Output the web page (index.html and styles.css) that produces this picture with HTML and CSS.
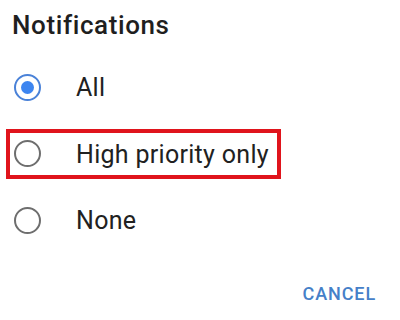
FILE: index.html
```html
<!DOCTYPE html>
<html>
<head>
<meta charset="utf-8">
<link rel="stylesheet" href="styles.css">
</head>
<body>
<div class="dialog">
  <div class="title">Notifications</div>
  <div class="options">
    <div class="option">
      <span class="radio checked"><span class="dot"></span></span>
      <span class="label">All</span>
    </div>
    <div class="option highlight">
      <span class="radio"></span>
      <span class="label">High priority only</span>
    </div>
    <div class="option">
      <span class="radio"></span>
      <span class="label">None</span>
    </div>
  </div>
  <div class="actions">
    <span class="btn">CANCEL</span>
  </div>
</div>
</body>
</html>
```

FILE: styles.css
```css
html, body {
  margin: 0;
  padding: 0;
  background: #ffffff;
}
.dialog {
  width: 400px;
  height: 320px;
  box-sizing: border-box;
  padding-top: 10px;
  font-family: Roboto, "Liberation Sans", sans-serif;
  color: #212121;
}
.title {
  padding-left: 12px;
  font-size: 26px;
  font-weight: 500;
  line-height: 30px;
  letter-spacing: 0.6px;
  color: #1f1f1f;
}
.options {
  margin-top: 22px;
  display: flex;
  flex-direction: column;
  gap: 16.5px;
}
.option {
  margin-left: 6px;
  width: 275px;
  height: 50px;
  box-sizing: border-box;
  border: 4px solid transparent;
  padding-left: 4px;
  display: flex;
  align-items: center;
}
.option.highlight {
  border-color: #e0141c;
}
.radio {
  width: 27px;
  height: 27px;
  box-sizing: border-box;
  border: 2.6px solid #6e6e6e;
  border-radius: 50%;
  display: flex;
  align-items: center;
  justify-content: center;
  flex-shrink: 0;
}
.radio.checked {
  border-color: #4a82d8;
}
.dot {
  width: 13px;
  height: 13px;
  border-radius: 50%;
  background: #3d85f0;
}
.label {
  margin-left: 35px;
  padding-top: 2px;
  font-size: 25px;
  line-height: 28px;
  letter-spacing: 0.3px;
  color: #212121;
}
.actions {
  margin-top: 39px;
  display: flex;
  justify-content: flex-end;
  padding-right: 24px;
}
.btn {
  font-size: 18px;
  font-weight: 500;
  line-height: 20px;
  letter-spacing: 0.9px;
  color: #4580c8;
}
```
